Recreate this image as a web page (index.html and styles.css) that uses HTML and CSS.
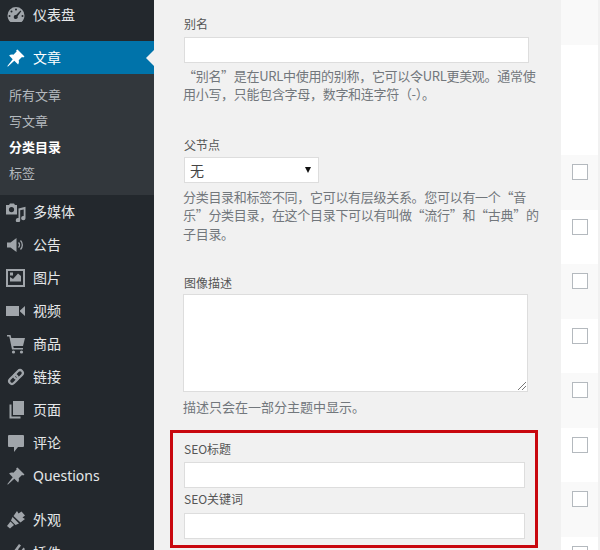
FILE: index.html
```html
<!DOCTYPE html>
<html lang="zh">
<head>
<meta charset="utf-8">
<title>分类目录</title>
<link rel="stylesheet" href="styles.css">
</head>
<body>
<div class="page">
  <nav class="sidebar">
    <a class="item first"><svg class="ico" viewBox="0 0 20 20"><path fill-rule="evenodd" d="M10 2a8.500 8.500 0 0 0-8.500 8.500c0 2.600 1.100 4.800 2.900 6.500h11.200c1.800-1.700 2.900-3.900 2.900-6.500A8.500 8.500 0 0 0 10 2zM10 3.500a1 1 0 1 1 0 2 1 1 0 0 1 0-2zM5.500 5.500a1 1 0 1 1 0 2 1 1 0 0 1 0-2zM14.500 5.500l.8.8-3.700 5a2 2 0 1 1-1.500-1.300zM3.500 10a1 1 0 1 1 0 2 1 1 0 0 1 0-2zM16.500 10a1 1 0 1 1 0 2 1 1 0 0 1 0-2z"/></svg><span>仪表盘</span></a>
    <a class="item active"><svg class="ico" viewBox="0 0 20 20"><path d="M11.500 1.500l7 7-1.300 1.100-1.200-.5-3.300 3.100c.5 1.600.2 3-.6 4.300L8.300 12.700 2 18.500l-.8-.2 5.500-7.100-3.600-3.800c1.200-.9 2.700-1.200 4.300-.7l3.200-3.200-.4-1.200z"/></svg><span>文章</span></a>
    <div class="sub">
      <a class="subitem">所有文章</a>
      <a class="subitem">写文章</a>
      <a class="subitem current">分类目录</a>
      <a class="subitem">标签</a>
    </div>
    <a class="item"><svg class="ico" viewBox="0 0 20 20"><path fill-rule="evenodd" d="M4 1.500h4l1 1.500h2v9.500H0V3h3zM5.500 5a2.600 2.600 0 1 0 0 5.200 2.600 2.600 0 0 0 0-5.200z"/><path d="M12.500 6.500l7-1.800V16a2.200 2.200 0 1 1-1.800-2V7.500l-3.500.8V18a2.200 2.200 0 1 1-1.700-2z"/></svg><span>多媒体</span></a>
    <a class="item"><svg class="ico" viewBox="0 0 20 20"><path d="M1 7.500h3.500L10.500 3v14l-6-4.500H1z"/><path class="line" d="M12.500 7.500a3.500 3.500 0 0 1 0 5M14.500 5.500a6.500 6.500 0 0 1 0 9"/></svg><span>公告</span></a>
    <a class="item"><svg class="ico" viewBox="0 0 20 20"><path fill-rule="evenodd" d="M0 1h19v18H0zM2 3v14h15V3z"/><path d="M4 4.500h3v3H4zM4 9l3 2 5-5.500 3 2.500v5.500H4z"/></svg><span>图片</span></a>
    <a class="item"><svg class="ico" viewBox="0 0 20 20"><path d="M0 5h13v10H0zM14 9.500l5-4.500v10l-5-4.500z"/></svg><span>视频</span></a>
    <a class="item"><svg class="ico" viewBox="0 0 20 20"><path d="M1 1h3.500l.8 3H19l-2 8H7.300l.4 2H17v1.500H6L3.300 2.500H1z"/><circle cx="7.500" cy="18" r="1.600"/><circle cx="15.500" cy="18" r="1.600"/></svg><span>商品</span></a>
    <a class="item"><svg class="ico" viewBox="0 0 20 20"><g class="thick" transform="rotate(-45 10 10)"><rect x="1.500" y="7.200" width="10" height="5.600" rx="2.800"/><rect x="8.500" y="7.200" width="10" height="5.600" rx="2.800"/></g></svg><span>链接</span></a>
    <a class="item"><svg class="ico" viewBox="0 0 20 20"><path d="M7 1h11v14H7z"/><path d="M3.500 4.500H5.500v12h9v2h-11z"/></svg><span>页面</span></a>
    <a class="item"><svg class="ico" viewBox="0 0 20 20"><path d="M3 2h14a1 1 0 0 1 1 1v10a1 1 0 0 1-1 1h-5l-4 5v-5H3a1 1 0 0 1-1-1V3a1 1 0 0 1 1-1z"/></svg><span>评论</span></a>
    <a class="item"><svg class="ico" viewBox="0 0 20 20"><path d="M11.500 1.500l7 7-1.300 1.100-1.200-.5-3.300 3.100c.5 1.600.2 3-.6 4.300L8.300 12.700 2 18.500l-.8-.2 5.500-7.100-3.600-3.800c1.200-.9 2.700-1.200 4.300-.7l3.200-3.200-.4-1.200z"/></svg><span>Questions</span></a>
    <a class="item separated"><svg class="ico" viewBox="0 0 20 20"><path d="M11 1l1.500 2.500 3-2 3.500 4-2.500 2L19 9l-4.500 3.500L7.500 6z"/><path d="M6.500 7l6.500 6.500-3.500 1.500L5 10.500z"/><path d="M4.500 11.500l3.500 3.500-4 3.500-3-2.500z"/></svg><span>外观</span></a>
    <a class="item"><svg class="ico" viewBox="0 0 20 20"><path d="M13 1l2 1.500-3 4 2.500 2 3-4 1.500 1.500-3 4.500c-1 1.500-3 2-4.500 1.500L5 18H2l5.500-7c-.5-1.500 0-3 1-4z"/></svg><span>插件</span></a>
  </nav>

  <main class="form">
    <div class="field slug">
      <label class="label">别名</label>
      <div class="input wide"></div>
      <p class="desc tight">“别名”是在URL中使用的别称，它可以令URL更美观。通常使<br>用小写，只能包含字母，数字和连字符（-）。</p>
    </div>
    <div class="field parent">
      <label class="label">父节点</label>
      <div class="select"><span>无</span><i class="caret"></i></div>
      <p class="desc tight">分类目录和标签不同，它可以有层级关系。您可以有一个“音<br>乐”分类目录，在这个目录下可以有叫做“流行”和“古典”的<br>子目录。</p>
    </div>
    <div class="field image">
      <label class="label">图像描述</label>
      <div class="textarea"><svg class="grip" viewBox="0 0 8 8"><path d="M0 8L8 0M4 8L8 4"/></svg></div>
      <p class="desc">描述只会在一部分主题中显示。</p>
    </div>
    <section class="seo">
      <label class="label">SEO标题</label>
      <div class="input seo-input"></div>
      <label class="label second">SEO关键词</label>
      <div class="input seo-input"></div>
    </section>
  </main>

  <aside class="table">
    <div class="row top"></div>
    <div class="row blank"></div>
    <div class="row alt"><i class="check"></i></div>
    <div class="row"><i class="check"></i></div>
    <div class="row alt"><i class="check"></i></div>
    <div class="row"><i class="check"></i></div>
    <div class="row alt"><i class="check"></i></div>
    <div class="row"><i class="check"></i></div>
    <div class="row alt"><i class="check"></i></div>
    <div class="row"><i class="check"></i></div>
  </aside>
</div>
</body>
</html>
```
FILE: styles.css
```css
* { box-sizing: border-box; }
html, body {
  margin: 0;
  height: 550px;
  overflow: hidden;
  background: #f1f1f1;
}
body {
  font-family: "Noto Sans", "Noto Sans CJK SC", sans-serif;
  font-weight: 400;
}
.page {
  display: flex;
  width: 600px;
  height: 550px;
  overflow: hidden;
}

/* sidebar */
.sidebar {
  flex: 0 0 154px;
  height: 550px;
  background: #23282d;
  color: #e6e8ea;
  overflow: hidden;
}
.item {
  position: relative;
  display: flex;
  align-items: center;
  height: 33px;
  padding-left: 6px;
  font-size: 14px;
  line-height: 20px;
}
.item span { margin-left: 7px; }
.item.first { height: 30px; margin-bottom: 11px; }
.item.separated { margin-top: 11px; }
.ico {
  flex: 0 0 20px;
  width: 20px;
  height: 20px;
  fill: #a0a5aa;
}
.ico .line, .ico .thick {
  fill: none;
  stroke: #a0a5aa;
}
.ico .line { stroke-width: 1.300; }
.ico .thick { stroke-width: 2.200; }
.active {
  background: #0073aa;
  color: #fff;
}
.active .ico { fill: #fff; }
.active::after {
  content: "";
  position: absolute;
  right: 0;
  top: 9px;
  border: 8px solid transparent;
  border-right-color: #f1f1f1;
  border-left-width: 0;
}
.sub {
  height: 121px;
  padding-top: 8px;
  background: #32373c;
}
.subitem {
  display: block;
  height: 26px;
  padding-left: 9px;
  font-size: 13px;
  line-height: 26px;
  color: #b4b9be;
}
.subitem.current {
  color: #fff;
  font-weight: 700;
}

/* form */
.form {
  flex: 0 0 407px;
  padding: 17px 0 0 30px;
  font-family: "Noto Sans CJK SC", "Noto Sans", sans-serif;
  font-size: 13px;
  color: #444;
}
.field { width: 360px; }
.label {
  display: block;
  height: 14px;
  font-size: 12px;
  line-height: 14px;
  color: #555;
}
.input, .select, .textarea {
  background: #fff;
  border: 1px solid #ddd;
}
.input { height: 26px; }
.input.wide { width: 345px; margin-top: 6px; }
.desc {
  margin: 4px 0 0 -1px;
  font-size: 13px;
  line-height: 18.400px;
  color: #72777c;
  white-space: nowrap;
}
.desc.tight { letter-spacing: -0.3px; }
.parent { margin-top: 34px; }
.parent .desc { margin-top: 5px; }
.select {
  display: flex;
  align-items: center;
  justify-content: space-between;
  width: 135px;
  height: 26px;
  margin-top: 5px;
  padding: 0 7px 0 5px;
  font-size: 14px;
  color: #444;
}
.caret {
  width: 0;
  height: 0;
  border: 3px solid transparent;
  border-top: 6px solid #111;
  border-bottom-width: 0;
}
.image { margin-top: 33px; }
.textarea {
  position: relative;
  width: 345px;
  height: 98px;
  margin: 4px 0 0 -1px;
}
.grip {
  position: absolute;
  right: 1px;
  bottom: 1px;
  width: 8px;
  height: 8px;
  fill: none;
  stroke: #777;
  stroke-width: 1;
}
.image .desc { margin-top: 6px; }
.seo {
  width: 368px;
  height: 118px;
  margin: 14px 0 0 -14px;
  padding: 9px 0 0 11px;
  border: 3px solid #c8080f;
}
.seo-input { width: 341px; margin-top: 6px; }
.second { margin-top: 4px; }
.seo .input:last-child { margin-top: 7px; }

/* table column */
.table {
  flex: 0 0 37px;
  height: 550px;
  overflow: hidden;
  background: #fff;
}
.row {
  height: 54.500px;
  padding: 9px 0 0 11px;
  background: #fff;
}
.row.top { height: 45px; padding: 0; background: #f9f9f9; }
.row.blank { height: 110px; padding: 0; }
.row.alt { background: #f9f9f9; }
.check {
  display: block;
  width: 16px;
  height: 16px;
  background: #fff;
  border: 1px solid #b4b9be;
}
```
